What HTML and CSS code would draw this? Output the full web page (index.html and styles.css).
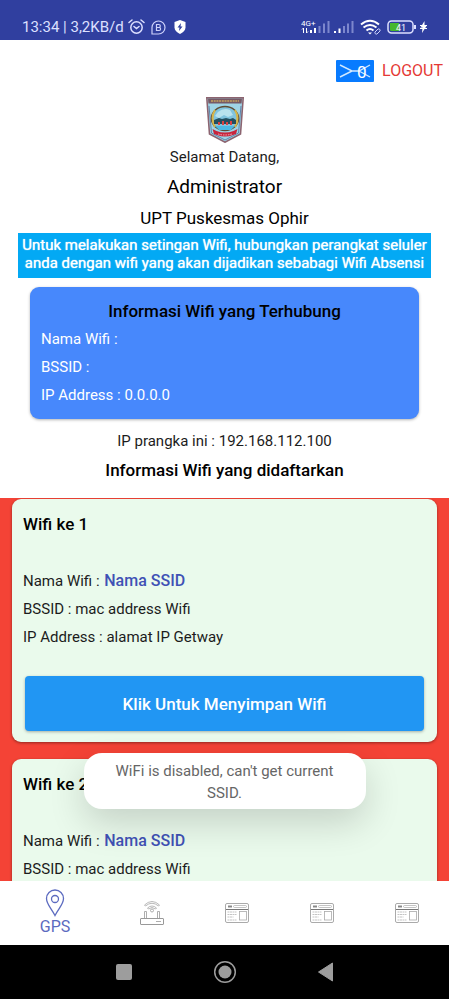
FILE: index.html
```html
<!DOCTYPE html>
<html lang="id">
<head>
<meta charset="utf-8">
<meta name="viewport" content="width=device-width, initial-scale=1">
<title>Setingan Wifi Absensi</title>
<link rel="stylesheet" href="styles.css">
</head>
<body>
<svg width="0" height="0" class="defs" aria-hidden="true">
  <symbol id="page-icon" viewBox="0 0 24 20">
    <g fill="none" stroke="#aaa">
      <rect x=".5" y=".5" width="23" height="19" rx="1.5"/>
      <path d="M1 6.5h22" stroke="#777"/>
      <rect x="8.5" y="2.5" width="13" height="2" rx="1" stroke-width=".7"/>
      <path d="M3 3.5h4" stroke="#888" stroke-width="2"/>
      <path d="M2.500 9h9M2.500 11.500h9M2.500 14h6M2.500 17h9" stroke-width=".7" stroke-dasharray="2 .5"/>
      <rect x="14.500" y="8.500" width="7" height="8.500" stroke-width=".8"/>
    </g>
  </symbol>
</svg>
<div class="phone">
  <header class="status">
    <div class="status-side">
      <span>13:34 | 3,2KB/d</span>
      <svg class="alarm" width="17" height="16" viewBox="0 0 17 16" fill="none" stroke="#dde0ff" stroke-width="1.500" stroke-linecap="round"><circle cx="8.500" cy="8.500" r="5.700"/><path d="M1 3.500 4 1M16 3.500 13 1M6 7.500l2.500 2 2.500-2"/></svg>
      <svg class="bubble" width="15" height="15" viewBox="0 0 15 15" fill="none" stroke="#cdd1fb" stroke-width="1.200"><path d="M1 14V7.500A6.500 6.500 0 1 1 7.500 14Z"/><path d="M5.500 4.500v6h2.600a1.500 1.500 0 0 0 0-3h-2.600h2.300a1.500 1.500 0 0 0 0-3z"/></svg>
      <svg class="shield" width="12" height="14" viewBox="0 0 12 14"><path d="M6 0 11.500 2v5.500c0 3-2.500 5-5.500 6.500C3 12.500.500 10.500.500 7.500V2Z" fill="#fff"/><path d="M7 3 3.500 7.500h2L5 11l3.500-4.500h-2Z" fill="#303f9f"/></svg>
    </div>
    <div class="status-side">
      <svg width="29" height="18" viewBox="0 0 29 18"><text x="0" y="8" class="net">4G+</text><path d="M2.500 10v5M1 11.500 2.500 10M5.500 10v5M7 13.500 5.500 15" stroke="#fff" fill="none"/><path d="M9 12h2v3H9zM13 10h2v5h-2z" fill="#fff"/><path d="M17.500 8h2v7h-2zM22 5.500h2V15h-2zM26.500 3h2v12h-2z" fill="#7d87cd"/></svg>
      <svg class="signal" width="20" height="18" viewBox="0 0 20 18"><path d="M0 13h2v2H0zM4.500 10.500h2V15h-2z" fill="#fff"/><path d="M9 8h2v7H9zM13 5.500h2V15h-2zM17.500 3h2v12h-2z" fill="#7d87cd"/></svg>
      <svg class="wireless" width="21" height="16" viewBox="0 0 21 16" fill="none" stroke="#fff" stroke-width="2"><path d="M1 5.500Q10 -2 19 5.500M3.500 8.500q6.500-5 13 0M6.500 11.500q3.500-3 7 0"/><path d="M8 13.500 10 15.500 12 13.500Z" fill="#fff" stroke="none"/><path d="m15 13 3-3a1.500 1.500 0 0 1 2 2l-3 3a1.500 1.500 0 0 1-2-2Z" stroke-width="1" stroke="#cdd1fb"/></svg>
      <svg class="battery" width="29" height="14" viewBox="0 0 29 14"><rect x="1" y="1" width="25" height="12" rx="3.500" fill="none" stroke="#dde0ff" stroke-width="1.500"/><path d="M3 3h9v8H4.500Q3 11 3 9.500z" fill="#46b72d"/><text x="9" y="10.500" class="level">41</text><path d="M28 5v4" stroke="#dde0ff" stroke-width="2"/></svg>
      <svg width="7" height="14" viewBox="0 0 7 14"><path d="M4.500 1 .500 7.500h2L2 13l4.500-7h-2Z" fill="#fff"/><path d="M0 5.500h7M0 8.500h7" stroke="#fff"/></svg>
    </div>
  </header>

  <main class="content">
    <div class="toolbar">
      <button class="mail" type="button" aria-label="Pesan: 0">
        <svg width="32" height="14" viewBox="0 0 32 14" fill="none" stroke="#cfe8ff" stroke-width="1.400"><path d="m1 1 12 6h7L31 1M1 13l12-6M20 7l11 6"/></svg>
        <span class="count">0</span>
      </button>
      <a class="logout" href="#">LOGOUT</a>
    </div>

    <section class="welcome">
      <svg width="38" height="46" viewBox="0 0 38 46" role="img" aria-label="Lambang Pasaman Barat">
        <path d="M.800.800h36.400L34.500 37 19 45.200 3.500 37Z" fill="#9fd4e6" stroke="#8c6470" stroke-width="1.600"/>
        <path d="M2 1.500h34l-.4 5H2.400Z" fill="#765965"/>
        <path d="M5 4h28" stroke="#b09060" stroke-width="2" stroke-dasharray="2 .700"/>
        <path d="M3 9 5.500 36 19 43 32.500 36 35 9" fill="none" stroke="#6185aa"/>
        <ellipse cx="19" cy="21.500" rx="13.500" ry="12" fill="#81c4df" stroke="#604c34" stroke-width="1.500"/>
        <path d="M9 13q-5 8 0 17M29 13q5 8 0 17" fill="none" stroke="#d5b64b" stroke-width="2"/>
        <path d="M12 15q6-5 12-2l3 5-5 2-4-2-5 3-4-2Z" fill="#b9e2ee"/>
        <path d="m8 23 5-2 3 1 4-1 4 1 3-1 3 2v4H8Z" fill="#244f60"/>
        <path d="M13 25v3M17 24v4M21 25v3M25 24v4" stroke="#d94242" stroke-width="2"/>
        <path d="M9 29h20l-4 4H13Z" fill="#4cb9e4"/>
        <path d="m6.500 32 4 2q8.500 3 17 0l4-2-1.500 5-3 1q-8 3-16 0l-3-1Z" fill="#c9243c"/>
        <path d="M12 37q7 2 14 0" stroke="#f2b2b8" fill="none" stroke-dasharray="1.500 1"/>
      </svg>
      <p class="greeting">Selamat Datang,</p>
      <h1>Administrator</h1>
      <p class="unit">UPT Puskesmas Ophir</p>
    </section>

    <p class="notice">Untuk melakukan setingan Wifi, hubungkan perangkat seluler anda dengan wifi yang akan dijadikan sebabagi Wifi Absensi</p>

    <section class="connected">
      <h2>Informasi Wifi yang Terhubung</h2>
      <p class="row">Nama Wifi :</p>
      <p class="row">BSSID :</p>
      <p class="row">IP Address : 0.0.0.0</p>
    </section>

    <p class="device">IP prangka ini : 192.168.112.100</p>
    <h2 class="list-title">Informasi Wifi yang didaftarkan</h2>

    <div class="list">
      <article class="card">
        <h3>Wifi ke 1</h3>
        <p class="row">Nama Wifi : <strong>Nama SSID</strong></p>
        <p class="row">BSSID : mac address Wifi</p>
        <p class="row">IP Address : alamat IP Getway</p>
        <button class="save" type="button">Klik Untuk Menyimpan Wifi</button>
      </article>
      <article class="card">
        <h3>Wifi ke 2</h3>
        <p class="row">Nama Wifi : <strong>Nama SSID</strong></p>
        <p class="row">BSSID : mac address Wifi</p>
      </article>
    </div>
    <div class="toast" role="status">WiFi is disabled, can't get current SSID.</div>
  </main>

  <nav class="tabs">
    <a class="tab active" href="#">
      <svg width="20" height="28" viewBox="0 0 20 28" fill="none" stroke="#5c6bc0" stroke-width="1.300"><path d="M10 26.500C6 19 1.500 15 1.500 9.500a8.500 8.500 0 0 1 17 0C18.500 15 14 19 10 26.500Z"/><circle cx="10" cy="10" r="3.500"/></svg>
      <span>GPS</span>
    </a>
    <a class="tab" href="#" aria-label="Wifi">
      <svg width="24" height="26" viewBox="0 0 24 26" fill="none" stroke="#999"><rect x=".5" y="18.500" width="23" height="6" rx=".5"/><path d="M4.500 18.500v-7h2v7M17.500 18.500v-7h2v7M16 21.500h5" stroke-width=".8"/><path d="M4.500 5q7.500-7 15 0l-1 1q-6.500-5.500-13 0ZM7.500 8q4.500-4 9 0l-1 1q-3.500-3-7 0Z" stroke-width=".7"/><circle cx="12" cy="10.500" r="1.500" stroke-width=".8"/></svg>
    </a>
    <a class="tab" href="#" aria-label="Halaman 1"><svg width="24" height="20"><use href="#page-icon"/></svg></a>
    <a class="tab" href="#" aria-label="Halaman 2"><svg width="24" height="20"><use href="#page-icon"/></svg></a>
    <a class="tab" href="#" aria-label="Halaman 3"><svg width="24" height="20"><use href="#page-icon"/></svg></a>
  </nav>

  <footer class="system">
    <button type="button" aria-label="Aplikasi terbaru"><svg width="24" height="24"><rect x="4" y="4" width="16" height="16" rx="2" fill="#9d9d9d"/></svg></button>
    <button type="button" aria-label="Beranda"><svg width="24" height="24"><circle cx="12" cy="12" r="10.300" fill="none" stroke="#9d9d9d" stroke-width="1.500"/><circle cx="12" cy="12" r="6.500" fill="#9d9d9d"/></svg></button>
    <button type="button" aria-label="Kembali"><svg width="24" height="24"><path d="M4.500 12 18.500 3v18Z" fill="#9d9d9d" stroke="#9d9d9d" stroke-linejoin="round"/></svg></button>
  </footer>
</div>
</body>
</html>
```
FILE: styles.css
```css
* { box-sizing: border-box; }
body { margin: 0; font-family: Roboto, "Liberation Sans", sans-serif; font-size: 15px; line-height: 28px; color: #1c1c1c; }
h1, h2, h3, p { margin: 0; }
button { font-family: inherit; border: 0; padding: 0; }
svg { display: block; flex: none; }
.defs { position: absolute; }
.phone { height: 100vh; display: flex; flex-direction: column; background: #fff; }

.status { flex: none; height: 40px; padding: 14px 22px 0; display: flex; align-items: center; justify-content: space-between; background: #303f9f; color: #dde0ff; line-height: 24px; }
.status-side { display: flex; align-items: center; gap: 4px; }
.bubble { margin-left: 2px; }
.wireless, .battery { margin-left: 2px; }
.shield { margin-left: 4px; }
.net { font: 8px Roboto, sans-serif; fill: #fff; }
.level { font: 9px Roboto, sans-serif; fill: #fff; }

.content { position: relative; flex: 1; min-height: 0; overflow: hidden; display: flex; flex-direction: column; }
.toolbar { display: flex; align-items: center; justify-content: flex-end; gap: 8px; padding: 17px 6px 0; }
.mail { position: relative; width: 38px; height: 22px; display: grid; place-items: center; border-radius: 1px; background: #087bff; color: #fff; }
.count { position: absolute; left: 21px; top: 2px; font-size: 17px; line-height: 20px; }
.logout { color: #e53935; font-size: 16px; text-decoration: none; }

.welcome { display: flex; flex-direction: column; align-items: center; padding-top: 12px; }
h1 { font-size: 19px; line-height: 32px; font-weight: 400; color: #000; }
.unit { font-size: 17px; line-height: 30px; color: #000; }

.notice { margin: 0 18px; padding: 3px 2px 6px; background: #03a9f4; color: #fff; line-height: 18px; text-align: center; text-shadow: 0 0 1px #fff; }
.connected { margin: 9px 30px 8px; padding: 10px 11px; border-radius: 9px; background: #4788fc; color: #fff; box-shadow: 0 1px 3px rgba(0, 0, 0, .3); }
h2 { font-size: 17px; line-height: 28px; font-weight: 500; text-align: center; color: #000; }
.device { text-align: center; }
.list-title { padding: 1px 0 14px; }

.list { flex: 1; min-height: 0; overflow: hidden; padding: 1px 12px; display: flex; flex-direction: column; gap: 17px; background: #f44336; }
.card { flex: none; padding: 11px; border-radius: 9px; background: #eafaec; box-shadow: 0 1px 3px rgba(0, 0, 0, .4); }
h3 { margin-bottom: 29px; font-size: 17px; line-height: 28px; font-weight: 500; color: #000; }
strong { margin-left: 1px; font-size: 16px; font-weight: 500; color: #3f51b5; }
.save { display: block; width: calc(100% - 4px); height: 55px; margin: 25px 2px 0; border-radius: 4px; background: #2196f3; color: #fff; font-size: 17px; font-weight: 500; box-shadow: 0 1px 3px rgba(0, 0, 0, .3); }

.toast { position: absolute; left: 50%; bottom: 72px; transform: translateX(-50%); width: 282px; padding: 7px 20px 5px; border-radius: 18px; background: #fff; color: #666; line-height: 22px; text-align: center; box-shadow: 0 14px 36px rgba(0, 0, 0, .16); }

.tabs { flex: none; height: 64px; display: flex; background: #fff; }
.tab { flex: 10; display: flex; flex-direction: column; align-items: center; justify-content: center; text-decoration: none; color: #5c6bc0; font-size: 16px; line-height: 20px; }
.active { flex-grow: 13; }
.system { flex: none; height: 54px; display: flex; align-items: center; justify-content: center; gap: 77px; background: #000; }
.system button { background: none; }
```
